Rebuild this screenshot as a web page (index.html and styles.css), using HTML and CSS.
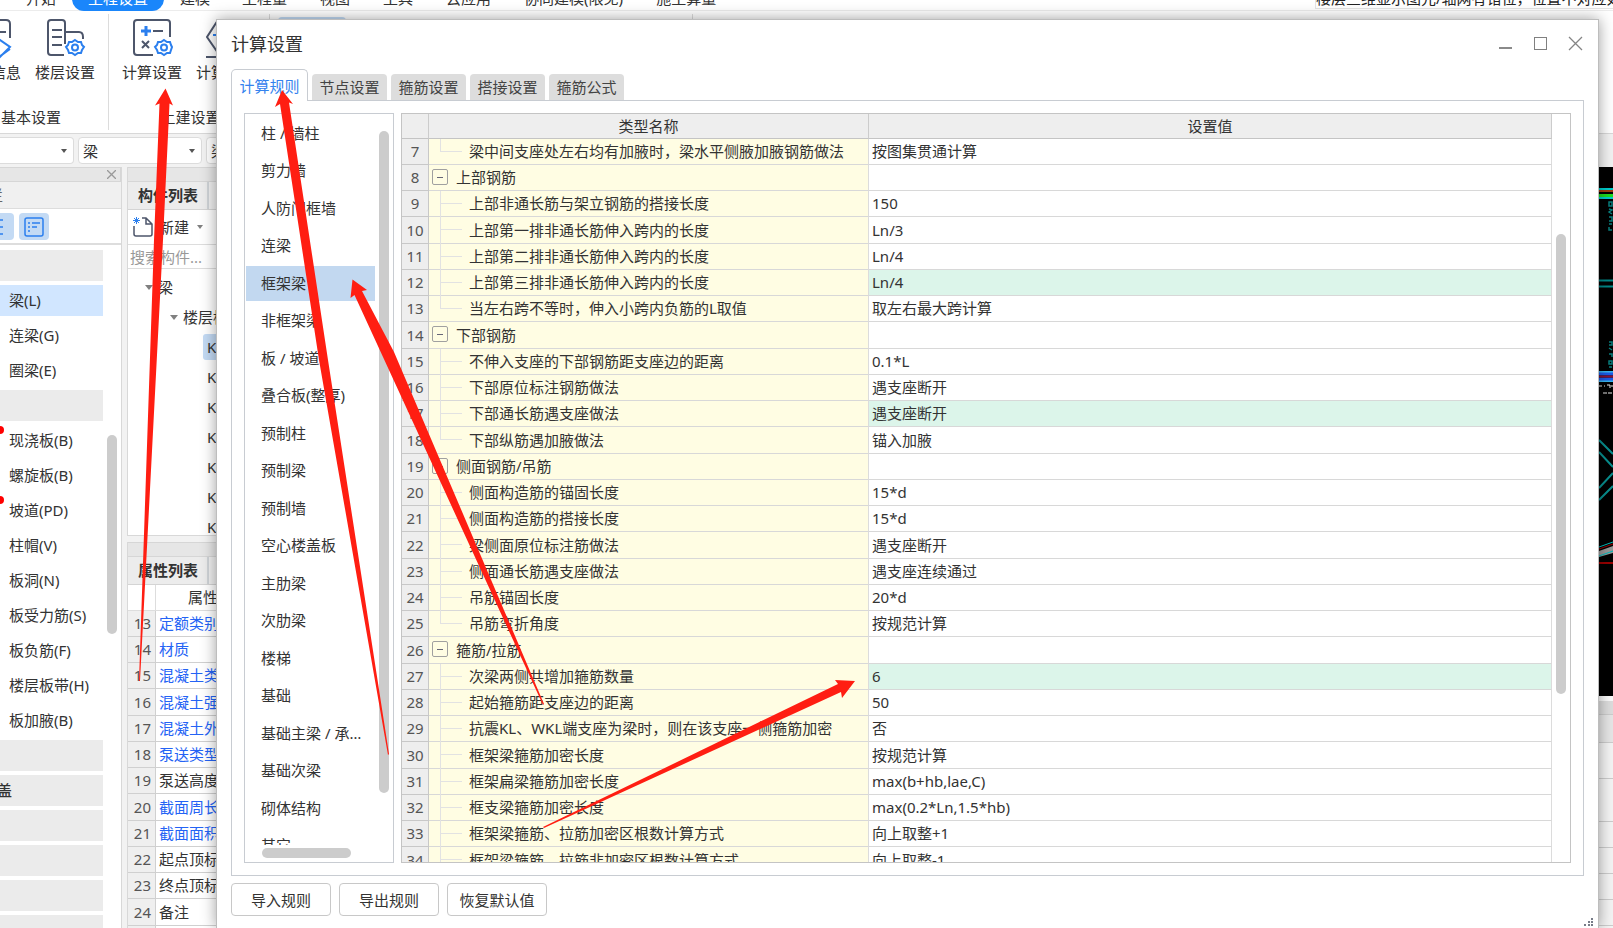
FILE: index.html
```html
<!DOCTYPE html>
<html lang="zh-CN">
<head>
<meta charset="utf-8">
<title>计算设置</title>
<link rel="stylesheet" href="styles.css">
</head>
<body>
<div class="app">
  <header class="menubar">
    <nav class="menu">
      <a href="#">开始</a><a href="#" class="current">工程设置</a><a href="#">建模</a><a href="#">工程量</a><a href="#">视图</a><a href="#">工具</a><a href="#">云应用</a><a href="#">协同建模(限免)</a><a href="#">施工算量</a>
    </nav>
    <div class="notice">楼层三维显示图元/轴网有错位，位置不对应如何处理</div>
  </header>

  <div class="ribbon">
    <section class="group group-basic">
      <div class="tools">
        <button class="tool" type="button">
          <svg width="42" height="42" viewBox="0 0 42 42" fill="none" stroke="#4d566b" stroke-width="2"><path d="M2 3h34q4 0 4 4v14M30 15h6"/><path d="M21 31l9-8 10 7-10 10-7-5M21 35l8 5 11-8" stroke="#2b7fee"/></svg>
          <span>工程信息</span>
        </button>
        <button class="tool" type="button">
          <svg width="42" height="42" viewBox="0 0 42 42" fill="none" stroke="#4d566b" stroke-width="2"><path d="M20 38H7q-3 0-3-3V6q0-3 3-3h11q3 0 3 3v21M8 13h10M8 20h10M8 28h10M21 15h14q4 0 4 5v2"/><g stroke="#2b7fee"><path d="M31 23l3 2 3 0 1 3 2 2-2 3-1 3-3 0-3 2-3-2-3 0-1-3-2-3 2-2 1-3 3 0z"/><circle cx="31" cy="30.500" r="3"/></g></svg>
          <span>楼层设置</span>
        </button>
      </div>
      <h2>基本设置</h2>
    </section>
    <section class="group group-civil">
      <div class="tools">
        <button class="tool" type="button">
          <svg width="42" height="42" viewBox="0 0 42 42" fill="none" stroke="#4d566b" stroke-width="2"><path d="M22 38H6q-3 0-3-3V6q0-3 3-3h30q3 0 3 3v14M22 14h10M11 24l7 7M18 24l-7 7"/><path d="M15 9v10M10 14h10" stroke="#2b7fee" stroke-width="3"/><g stroke="#2b7fee"><path d="M33 23l3 2 3 0 1 3 1 2-1 3-1 3-3 0-3 2-3-2-3 0-1-3-2-3 2-2 1-3 3 0z"/><circle cx="33" cy="30.500" r="3"/></g></svg>
          <span>计算设置</span>
        </button>
        <button class="tool" type="button">
          <svg width="42" height="42" viewBox="0 0 42 42" fill="none" stroke="#4d566b" stroke-width="2"><path d="M30 3H13L2 20l11 16M1 40h34"/><path d="M8 18h10" stroke="#2b7fee"/></svg>
          <span>计算规则</span>
        </button>
      </div>
      <h2>土建设置</h2>
    </section>
    <section class="group group-steel"><i class="pressed"></i></section>
  </div>

  <div class="combos">
    <select aria-label="楼层" class="combo-floor"><option></option></select>
    <select aria-label="构件类型" class="combo-kind"><option>梁</option></select>
    <select aria-label="构件"><option>梁</option></select>
  </div>

  <div class="workspace">
    <aside class="nav-panel">
      <div class="strip"><button type="button" class="close-small" aria-label="关闭"><svg width="9" height="9" viewBox="0 0 9 9" stroke="#999" stroke-width="1.300"><path d="M0 0l9 9M9 0L0 9"/></svg></button></div>
      <h3 class="nav-title"><span>导航栏</span></h3>
      <div class="view-switch">
        <button type="button" aria-label="列表"><svg width="20" height="20" viewBox="0 0 20 20" stroke="#2b7fee" stroke-width="1.500"><path d="M0 3h14M0 10h14M0 17h14"/></svg></button>
        <button type="button" aria-label="分组"><svg width="20" height="20" viewBox="0 0 20 20" fill="none" stroke="#2b7fee" stroke-width="1.500"><rect x="1" y="1" width="18" height="18" rx="2"/><path d="M4 6h2M8 6h8M4 10h2M8 10h5M4 14h2"/></svg></button>
      </div>
      <div class="nav-body">
        <ul class="nav-list">
          <li class="head"></li>
          <li class="on">梁(L)</li>
          <li>连梁(G)</li>
          <li>圈梁(E)</li>
          <li class="head"></li>
          <li class="dot">现浇板(B)</li>
          <li>螺旋板(B)</li>
          <li class="dot">坡道(PD)</li>
          <li>柱帽(V)</li>
          <li>板洞(N)</li>
          <li>板受力筋(S)</li>
          <li>板负筋(F)</li>
          <li>楼层板带(H)</li>
          <li>板加腋(B)</li>
          <li class="head"></li>
          <li class="head"><span>楼盖</span></li>
          <li class="head"></li>
          <li class="head"></li>
          <li class="head"></li>
          <li class="head"></li>
        </ul>
        <i class="thumb"></i>
      </div>
    </aside>

    <div class="mid">
      <section class="parts">
        <div class="strip"></div>
        <div class="tabrow"><b>构件列表</b></div>
        <div class="create">
          <svg width="20" height="20" viewBox="0 0 20 20" fill="none" stroke="#4d566b" stroke-width="1.500"><path d="M1 9v8q0 2 2 2h14q2 0 2-2V7l-6-6H9M13 1v6h6"/><path d="M1 1l5 5M6 1L1 6M0 3.500h7M3.500 0v7" stroke="#2b7fee" stroke-width="1"/></svg>
          <button type="button">新建</button><i class="caret"></i>
        </div>
        <input class="search" type="text" aria-label="搜索构件" placeholder="搜索构件...">
        <ul class="tree">
          <li class="l1"><i class="caret"></i>梁</li>
          <li class="l2"><i class="caret"></i>楼层框架梁</li>
          <li class="l3"><span class="on">KL1</span></li>
          <li class="l3"><span>KL2</span></li>
          <li class="l3"><span>KL3</span></li>
          <li class="l3"><span>KL4</span></li>
          <li class="l3"><span>KL5</span></li>
          <li class="l3"><span>KL6</span></li>
          <li class="l3"><span>KL7</span></li>
        </ul>
      </section>
      <section class="props">
        <div class="strip"></div>
        <div class="tabrow"><b>属性列表</b></div>
        <table>
          <thead><tr><th></th><th>属性名称</th></tr></thead>
          <tbody>
            <tr><td>13</td><td class="link">定额类别</td></tr>
            <tr><td>14</td><td class="link">材质</td></tr>
            <tr><td>15</td><td class="link">混凝土类型</td></tr>
            <tr><td>16</td><td class="link">混凝土强度等级</td></tr>
            <tr><td>17</td><td class="link">混凝土外加剂</td></tr>
            <tr><td>18</td><td class="link">泵送类型</td></tr>
            <tr><td>19</td><td>泵送高度(m)</td></tr>
            <tr><td>20</td><td class="link">截面周长(m)</td></tr>
            <tr><td>21</td><td class="link">截面面积(m²)</td></tr>
            <tr><td>22</td><td>起点顶标高(m)</td></tr>
            <tr><td>23</td><td>终点顶标高(m)</td></tr>
            <tr><td>24</td><td>备注</td></tr>
            <tr><td></td><td></td></tr>
          </tbody>
        </table>
      </section>
    </div>

    <div class="canvas">
      <svg class="cad" width="14" height="529" viewBox="0 0 14 529" fill="none">
        <rect width="14" height="529" fill="#000"/>
        <path d="M0 22h14M0 31h14" stroke="#0cc" stroke-width="2"/>
        <path d="M0 24h14" stroke="#a33a10" stroke-width="2"/>
        <path d="M0 28.500h14" stroke="#1fdc1f" stroke-width="3"/>
        <path d="M0 113.500h14M0 119.500h14" stroke="#088" stroke-width="2"/>
        <path d="M10 35h3v4h-3zM10 42l3 1-3 2 3 2M10 50h3v4h-3M10 57h3M10 60v3h3M10 175h3v3h-3M10 181l3 2M10 187h3v3M10 194h3v3h-3zM10 200h3" stroke="#087f7f" stroke-width="1.500"/>
        <path d="M0 205h14M0 214h14" stroke="#3bb7f0" stroke-width="2"/>
        <path d="M0 207h14M0 212h14" stroke="#1b5be8" stroke-width="3"/>
        <path d="M0 209.500h14" stroke="#8b1038" stroke-width="2"/>
        <path d="M0 219h3M5 219h1M8 218h3v3M12 219h2M4 226h2M7 225v2M9 226h4" stroke="#eee"/>
        <path d="M0 273l14 14M0 285l14 15M0 321l14-15M0 333l14-14" stroke="#089090" stroke-width="2"/>
        <path d="M0 384l14-5v7l-14 4z" fill="#999"/>
        <path d="M0 380l14-5M0 389l14-5" stroke="#0bb"/>
        <path d="M0 382l14-5" stroke="#900"/>
        <path d="M0 396h14" stroke="#900" stroke-width="2"/>
      </svg>
      <div class="grid-below"><i></i><i></i><i></i><i></i><i></i><i></i><i></i><i></i></div>
    </div>
  </div>
</div>

<main class="dialog" role="dialog" aria-labelledby="dlg-title">
  <div class="titlebar">
    <h1 id="dlg-title">计算设置</h1>
    <div class="winbtns">
      <button type="button" aria-label="最小化"><svg width="15" height="15" viewBox="0 0 15 15" stroke="#8a8a8a" stroke-width="2"><path d="M1 12h13"/></svg></button>
      <button type="button" aria-label="最大化"><svg width="15" height="15" viewBox="0 0 15 15" fill="none" stroke="#808080"><rect x="1.500" y="1.500" width="12" height="12"/></svg></button>
      <button type="button" aria-label="关闭"><svg width="15" height="15" viewBox="0 0 15 15" stroke="#858585" stroke-width="1.300"><path d="M1 1l13 13M14 1L1 14"/></svg></button>
    </div>
  </div>
  <div class="tabs" role="tablist">
    <button type="button" role="tab" aria-selected="true" class="active">计算规则</button>
    <button type="button" role="tab">节点设置</button>
    <button type="button" role="tab">箍筋设置</button>
    <button type="button" role="tab">搭接设置</button>
    <button type="button" role="tab">箍筋公式</button>
  </div>
  <div class="pane">
    <div class="kinds">
      <div class="kinds-view">
      <ul>
        <li>柱 / 墙柱</li><li>剪力墙</li><li>人防门框墙</li><li>连梁</li><li class="on">框架梁</li><li>非框架梁</li><li>板 / 坡道</li><li>叠合板(整厚)</li><li>预制柱</li><li>预制梁</li><li>预制墙</li><li>空心楼盖板</li><li>主肋梁</li><li>次肋梁</li><li>楼梯</li><li>基础</li><li>基础主梁 / 承台梁</li><li>基础次梁</li><li>砌体结构</li><li>其它</li>
      </ul>
      <div class="vbar"><i></i></div>
      </div>
      <div class="hbar"><i></i></div>
    </div>
    <div class="rules">
      <div class="rules-view">
      <table>
        <colgroup><col class="c-num"><col class="c-name"><col></colgroup>
        <thead><tr><th></th><th>类型名称</th><th>设置值</th></tr></thead>
        <tbody>
          <tr class="leaf last"><td>7</td><td>梁中间支座处左右均有加腋时，梁水平侧腋加腋钢筋做法</td><td>按图集贯通计算</td></tr>
          <tr class="node"><td>8</td><td><button type="button" aria-label="折叠"></button>上部钢筋</td><td></td></tr>
          <tr class="leaf"><td>9</td><td>上部非通长筋与架立钢筋的搭接长度</td><td>150</td></tr>
          <tr class="leaf"><td>10</td><td>上部第一排非通长筋伸入跨内的长度</td><td>Ln/3</td></tr>
          <tr class="leaf"><td>11</td><td>上部第二排非通长筋伸入跨内的长度</td><td>Ln/4</td></tr>
          <tr class="leaf changed"><td>12</td><td>上部第三排非通长筋伸入跨内的长度</td><td>Ln/4</td></tr>
          <tr class="leaf last"><td>13</td><td>当左右跨不等时，伸入小跨内负筋的L取值</td><td>取左右最大跨计算</td></tr>
          <tr class="node"><td>14</td><td><button type="button" aria-label="折叠"></button>下部钢筋</td><td></td></tr>
          <tr class="leaf"><td>15</td><td>不伸入支座的下部钢筋距支座边的距离</td><td>0.1*L</td></tr>
          <tr class="leaf"><td>16</td><td>下部原位标注钢筋做法</td><td>遇支座断开</td></tr>
          <tr class="leaf changed"><td>17</td><td>下部通长筋遇支座做法</td><td>遇支座断开</td></tr>
          <tr class="leaf last"><td>18</td><td>下部纵筋遇加腋做法</td><td>锚入加腋</td></tr>
          <tr class="node"><td>19</td><td><button type="button" aria-label="折叠"></button>侧面钢筋/吊筋</td><td></td></tr>
          <tr class="leaf"><td>20</td><td>侧面构造筋的锚固长度</td><td>15*d</td></tr>
          <tr class="leaf"><td>21</td><td>侧面构造筋的搭接长度</td><td>15*d</td></tr>
          <tr class="leaf"><td>22</td><td>梁侧面原位标注筋做法</td><td>遇支座断开</td></tr>
          <tr class="leaf"><td>23</td><td>侧面通长筋遇支座做法</td><td>遇支座连续通过</td></tr>
          <tr class="leaf"><td>24</td><td>吊筋锚固长度</td><td>20*d</td></tr>
          <tr class="leaf last"><td>25</td><td>吊筋弯折角度</td><td>按规范计算</td></tr>
          <tr class="node"><td>26</td><td><button type="button" aria-label="折叠"></button>箍筋/拉筋</td><td></td></tr>
          <tr class="leaf changed"><td>27</td><td>次梁两侧共增加箍筋数量</td><td>6</td></tr>
          <tr class="leaf"><td>28</td><td>起始箍筋距支座边的距离</td><td>50</td></tr>
          <tr class="leaf"><td>29</td><td>抗震KL、WKL端支座为梁时，则在该支座一侧箍筋加密</td><td>否</td></tr>
          <tr class="leaf"><td>30</td><td>框架梁箍筋加密长度</td><td>按规范计算</td></tr>
          <tr class="leaf"><td>31</td><td>框架扁梁箍筋加密长度</td><td>max(b+hb,lae,C)</td></tr>
          <tr class="leaf"><td>32</td><td>框支梁箍筋加密长度</td><td>max(0.2*Ln,1.5*hb)</td></tr>
          <tr class="leaf"><td>33</td><td>框架梁箍筋、拉筋加密区根数计算方式</td><td>向上取整+1</td></tr>
          <tr class="leaf"><td>34</td><td>框架梁箍筋、拉筋非加密区根数计算方式</td><td>向上取整-1</td></tr>
        </tbody>
      </table>
      </div>
      <div class="vbar"><i></i></div>
    </div>
  </div>
  <div class="actions">
    <button type="button">导入规则</button>
    <button type="button">导出规则</button>
    <button type="button">恢复默认值</button>
  </div>
  <svg class="grip" width="11" height="8" viewBox="0 0 11 8" fill="#777c88"><path d="M8 0h2v2h-2zM5 3h2v2h-2zM8 3h2v2h-2zM1 6h2v2h-2zM5 6h2v2h-2zM8 6h2v2h-2z"/></svg>
</main>

<svg class="arrows" width="1613" height="928" viewBox="0 0 1613 928" fill="#ff1e12" aria-hidden="true">
  <path d="M165.500 88.500L173 105.500L169.500 103.500L163 240L140 681L139 681L154 240L159.500 103.500L155 105.500Z"/>
  <path d="M282 90L293 104L289 102.500L328 360L389 754L388 755L319 360L280 104L275 107Z"/>
  <path d="M352.500 279.500L367 290L362 291L394 352L544 704L543 705L383 357L354.500 295L350.500 298Z"/>
  <path d="M855 681L842 698L841 692L544 828L543 827L838 684L835 680Z"/>
</svg>
</body>
</html>
```
FILE: styles.css
```css
* { box-sizing: border-box; }

body {
  margin: 0;
  height: 100vh;
  overflow: hidden;
  position: relative;
  background: #f2f2f2;
  color: #333;
  font: 15px/20px "Noto Sans", "Noto Sans CJK SC", sans-serif;
}

h1, h2, h3, ul { margin: 0; padding: 0; font-weight: normal; font-size: inherit; list-style: none; }
button, input, select { font: inherit; color: inherit; }
button { border: 0; padding: 0; background: none; }
svg, i { display: block; flex: none; }
table { border-collapse: separate; border-spacing: 0; table-layout: fixed; }
th { font-weight: normal; }

/* application window */
.app { height: 100%; display: flex; flex-direction: column; }

.menubar {
  height: 11px;
  display: flex;
  justify-content: space-between;
  align-items: flex-end;
  background: #fff;
  border-bottom: 1px solid #ececec;
  flex: none;
}
.menu { display: flex; padding-left: 10px; margin-bottom: -1px; }
.menu a { padding: 0 16px; line-height: 25px; color: #333; text-decoration: none; white-space: nowrap; }
.menu a:nth-child(n+4) { padding-right: 17px; }
.menu .current { color: #fff; background: #1a86fb; border-radius: 12px; }
.notice {
  width: 298px;
  line-height: 20px;
  border: 1px solid #e4e4e4;
  border-right: 0;
  margin-bottom: 1px;
  overflow: hidden;
  white-space: nowrap;
  color: #222;
}

.ribbon { height: 123px; display: flex; background: #fff; border-bottom: 1px solid #d8d8d8; flex: none; }
.group { margin: 3px 0; padding-top: 3px; border-right: 1px solid #dcdcdc; overflow: hidden; white-space: nowrap; flex: none; }
.group h2 { margin-top: 25px; }
.group-basic { width: 109px; }
.group-basic .tools { margin-left: -46px; }
.group-basic h2 { padding-left: 1px; }
.group-civil { width: 161px; }
.group-civil .tools { padding-left: 6px; }
.group-civil h2 { text-align: center; padding-left: 3px; }
.group-steel { width: 423px; }
.pressed { width: 68px; height: 90px; margin-left: 8px; border-radius: 4px; background: #c2dbf5; }
.tools { display: flex; }
.tool { width: 74px; display: flex; flex-direction: column; align-items: center; flex: none; }
.tool span { line-height: 20px; margin-top: 3px; }

.combos { height: 33px; padding: 3px 0; display: flex; gap: 4px; flex: none; }
.combos select {
  appearance: none;
  width: 124px;
  padding: 0 4px;
  border: 1px solid #dcdcdc;
  border-radius: 4px;
  background: #fff url("data:image/svg+xml,%3Csvg xmlns='http://www.w3.org/2000/svg' width='6' height='4'%3E%3Cpath d='M0 0h6L3 4z' fill='%23555'/%3E%3C/svg%3E") no-repeat right 6px center;
}
.combos .combo-floor { width: 74px; border-left: 0; border-radius: 0 4px 4px 0; }

.workspace { flex: 1; min-height: 0; display: flex; overflow: hidden; }
.strip { height: 15px; background: #e6e6e6; border: 1px solid #d6d6d6; border-left: 0; flex: none; display: flex; justify-content: flex-end; align-items: center; }
.close-small { margin-right: 4px; }

.nav-panel { width: 122px; display: flex; flex-direction: column; border-right: 1px solid #d8d8d8; background: #fff; flex: none; overflow: hidden; }
.nav-title { height: 27px; line-height: 26px; background: #f0f0f0; border-bottom: 1px solid #ddd; flex: none; color: #666; }
.nav-title span { display: block; margin-left: -42px; }
.view-switch { height: 36px; padding-top: 4px; display: flex; gap: 5px; margin-left: -16px; border-bottom: 2px solid #ddd; flex: none; }
.view-switch button { width: 30px; height: 27px; border-radius: 4px; background: #c3daf4; display: grid; place-items: center; }
.nav-body { display: flex; flex: 1; min-height: 0; padding-top: 5px; }
.nav-list { width: 103px; flex: none; }
.nav-list li { height: 31px; margin-bottom: 4px; padding-left: 9px; line-height: 30px; white-space: nowrap; position: relative; }
.nav-list .head { background: #ebebeb; padding: 0; }
.nav-list .head span { display: block; margin-left: -18px; font-weight: 500; }
.nav-list .on { background: #d1e6ff; }
.dot::before { content: ""; position: absolute; left: -4px; top: 1px; width: 8px; height: 8px; border-radius: 50%; background: #f00; }
.thumb { width: 10px; height: 199px; border-radius: 5px; background: #ccc; margin: 185px 0 0 4px; }

.mid { width: 270px; margin-left: 5px; display: flex; flex-direction: column; gap: 6px; flex: none; }
.parts { height: 369px; background: #fff; border: 1px solid #d8d8d8; border-top: 0; flex: none; overflow: hidden; }
.tabrow { height: 28px; background: #f0f0f0; border-bottom: 1px solid #d4d4d4; }
.tabrow b { display: block; width: 81px; line-height: 27px; padding-left: 10px; background: #ececec; border-right: 2px solid #d0d4d8; }
.create { height: 35px; display: flex; align-items: center; padding-left: 5px; gap: 6px; border-bottom: 1px solid #ddd; }
.caret { width: 0; border: 4px solid transparent; border-top: 5px solid #808080; border-bottom: 0; }
.create .caret { border-width: 4px 3px 0; margin-left: 2px; }
.search { display: block; width: 100%; height: 24px; padding: 0 2px; border: 0; border-bottom: 1px solid #ddd; outline: 0; }
.search::placeholder { color: #999; opacity: 1; }
.tree { padding-top: 3px; }
.tree li { display: flex; align-items: center; gap: 5px; height: 30px; }
.tree .l1 { padding-left: 17px; }
.tree .l2 { padding-left: 42px; }
.tree .l3 { padding-left: 75px; }
.tree span { padding-left: 4px; width: 180px; line-height: 26px; border-radius: 3px; }
.tree .on { background: #c3daf4; }

.props { flex: 1; min-height: 0; background: #fff; border-left: 1px solid #d8d8d8; overflow: hidden; }
.props table { width: 220px; }
.props th { height: 26px; border-bottom: 1px solid #ddd; border-right: 1px solid #ddd; padding: 0; line-height: 25px; }
.props th:first-child { width: 28px; }
.props th + th { text-align: left; padding-left: 32px; }
.props td { height: 26px; padding: 0 0 0 3px; line-height: 25px; border-bottom: 1px solid #d0d0d0; white-space: nowrap; }
.props tr:nth-child(4n) td { height: 27px; }
.props td:first-child { background: #efefef; border-right: 1px solid #d0d0d0; text-align: right; padding: 0 4px 0 0; color: #555; }
.props .link { color: #2463f5; }

.canvas { margin-left: auto; width: 14px; flex: none; background: #f4f4f4; }
.grid-below { border-top: 5px solid #fafafa; }
.grid-below i { height: 26px; border-bottom: 1px solid #ccc; }
.grid-below i:nth-child(1) { height: 14px; background: #ddd; }
.grid-below i:nth-child(2) { height: 28px; background: #e6e6e6; }
.grid-below i:nth-child(3) { height: 36px; }
.grid-below i:nth-child(4) { height: 43px; }

/* settings dialog, floating over the application */
.dialog {
  position: absolute;
  z-index: 1;
  left: 216px;
  right: 14px;
  top: 19px;
  bottom: 0;
  padding: 0 14px 12px;
  display: flex;
  flex-direction: column;
  background: #fff;
  border: 1px solid #bdbdbd;
  border-bottom: 0;
  box-shadow: 0 0 14px rgba(0, 0, 0, .38);
}
.titlebar { height: 49px; padding-bottom: 2px; display: flex; justify-content: space-between; align-items: center; flex: none; }
.titlebar h1 { font-size: 18px; line-height: 24px; }
.winbtns { display: flex; gap: 20px; padding-right: 1px; }

.tabs { height: 32px; display: flex; align-items: flex-end; gap: 4px; flex: none; }
.tabs button { width: 75px; height: 26px; margin-bottom: 1px; border-radius: 4px 4px 0 0; background: #ddd; color: #444; }
.tabs .active { width: 77px; height: 32px; margin: 0; background: #fff; color: #3482ee; border: 1px solid #c8ccd2; border-bottom: 0; border-radius: 5px 5px 0 0; position: relative; z-index: 1; }

.pane { flex: 1; min-height: 0; margin-top: -1px; padding: 12px; display: flex; gap: 7px; border: 1px solid #c8ccd2; }

.kinds { width: 150px; display: flex; flex-direction: column; border: 1px solid #c8ccd2; flex: none; padding: 2px 1px 4px; }
.kinds-view { flex: 1; min-height: 0; display: flex; gap: 4px; overflow: hidden; }
.kinds ul { width: 129px; }
.kinds li { height: 35px; margin-bottom: 2px; padding: 0 8px 0 15px; line-height: 35px; white-space: nowrap; overflow: hidden; text-overflow: ellipsis; }
.kinds li:nth-child(even) { margin-bottom: 3px; }
.kinds .on { background: #c2d8f0; }
.vbar { width: 10px; flex: none; }
.vbar i { width: 10px; border-radius: 5px; background: #ccc; }
.kinds .vbar i { height: 662px; margin-top: 15px; }
.hbar { padding: 3px 0 0 16px; }
.hbar i { width: 89px; height: 10px; border-radius: 5px; background: #ccc; }

.rules { flex: 1; min-width: 0; display: flex; border: 1px solid #c4c4c4; }
.rules-view { flex: 1; min-width: 0; overflow: hidden; }
.rules table { width: 100%; }
.rules .c-num { width: 27px; }
.rules .c-name { width: 440px; }
.rules th { height: 25px; padding: 0; line-height: 24px; background: #eee; border-right: 1px solid #ccc; border-bottom: 1px solid #c4c4c4; }
.rules td { height: 26px; padding: 0 0 0 3px; line-height: 25px; border-right: 1px solid #dcdcdc; border-bottom: 1px solid #d8d8d8; white-space: nowrap; position: relative; }
.rules tr:nth-child(4n) td { height: 27px; }
.rules td:first-child { padding: 0; text-align: center; background: #eee; color: #555; border-color: #c8c8c8; }
.rules td:nth-child(2) { background: #fffde3; }
.leaf td:nth-child(2) { padding-left: 40px; }
.node td:nth-child(2) { padding-left: 27px; }
.changed td:nth-child(3) { background: #dcf5ea; }
.leaf td:nth-child(2)::before { content: ""; position: absolute; left: 11px; top: 0; width: 21px; height: 12px; border: solid #e2e2e2; border-width: 0 0 1px 1px; }
.leaf td:nth-child(2)::after { content: ""; position: absolute; left: 11px; top: 12px; bottom: -1px; border-left: 1px solid #e2e2e2; }
.leaf.last td:nth-child(2)::after { display: none; }
.node td button { position: absolute; left: 3px; top: 4px; width: 16px; height: 16px; border: 1px solid #a0a0a0; border-radius: 2px; background: linear-gradient(#667, #667) no-repeat center / 6px 1px; }
.rules > .vbar { width: 18px; padding: 120px 4px 0; }
.rules > .vbar i { height: 460px; }

.actions { display: flex; gap: 8px; margin-top: 7px; flex: none; }
.actions button { width: 100px; height: 33px; border: 1px solid #c8c8c8; border-radius: 4px; background: #fff; }
.grip { position: absolute; right: 4px; bottom: 2px; }

/* hand-drawn pointers above everything */
.arrows { position: absolute; z-index: 2; left: 0; top: 0; pointer-events: none; }
```
